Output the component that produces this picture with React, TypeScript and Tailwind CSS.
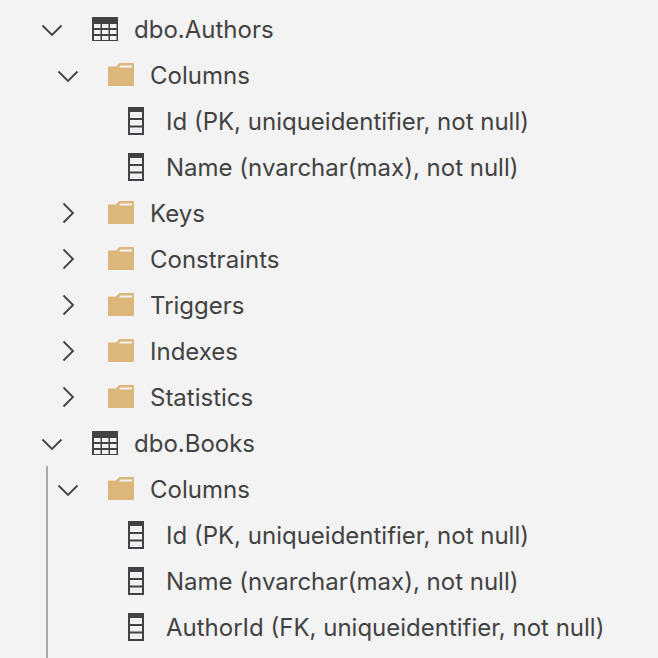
const Chevron = ({ open }: { open: boolean }) => (
  <svg width="22" height="22" viewBox="0 0 22 22" fill="none" stroke="#424242" strokeWidth="1.8" className={open ? "shrink-0" : "-mt-[2px] shrink-0"}>
    {open ? <path d="M1.5 6.5 L11 16 L20.5 6.5" /> : <path d="M6.5 1.5 L16 11 L6.5 20.5" />}
  </svg>
);

const TableIcon = () => (
  <svg width="26" height="24" viewBox="0 0 26 24" className="-mt-[2px] shrink-0">
    <rect x="0" y="0" width="26" height="24" fill="#424242" />
    <g fill="#f3f3f3">
      {[7, 13, 19].map((y) =>
        [2, 10, 18].map((x) => <rect key={`${x}-${y}`} x={x} y={y} width="6.5" height="4" />)
      )}
    </g>
  </svg>
);

const FolderIcon = () => (
  <svg width="26" height="23" viewBox="0 0 26 23" className="-mt-[4px] shrink-0">
    <path d="M1 3.5 H8 L10.5 0.8 Q11.2 0 12.2 0 H25 Q26 0 26 1 V22 Q26 23 25 23 H1 Q0 23 0 22 V4.5 Q0 3.5 1 3.5 Z" fill="#dcb67a" />
    <path d="M11 4.6 L12.6 2.4 H24 V4.6 Z" fill="#f3f3f3" />
  </svg>
);

const ColumnIcon = () => (
  <svg width="16" height="28" viewBox="0 0 16 28" className="-mt-[2px] shrink-0">
    <rect x="0" y="0" width="16" height="28" fill="#424242" />
    <g fill="#eef0f3">
      <rect x="2" y="5" width="12" height="6" />
      <rect x="2" y="13" width="12" height="5.5" />
      <rect x="2" y="20.5" width="12" height="5.5" />
    </g>
  </svg>
);

type RowProps = { indent: string; chevron?: boolean | null; icon: React.ReactNode; iconBox: string; label: string };

const Row = ({ indent, chevron = null, icon, iconBox, label }: RowProps) => (
  <div className={`flex h-[46px] items-center ${indent}`}>
    <div className="flex w-[22px] shrink-0 items-center justify-center">
      {chevron !== null && <Chevron open={chevron} />}
    </div>
    <div className={`flex shrink-0 items-center justify-start ${iconBox}`}>{icon}</div>
    <span className="whitespace-nowrap text-[24px] leading-none text-[#424242]">{label}</span>
  </div>
);

const Column = ({ label }: { label: string }) => (
  <Row indent="pl-[106px]" icon={<ColumnIcon />} iconBox="w-[38px]" label={label} />
);

const Folder = ({ label, open = false }: { label: string; open?: boolean }) => (
  <Row indent="pl-[57px]" chevron={open} icon={<FolderIcon />} iconBox="w-[71px] pl-[29px]" label={label} />
);

const Table = ({ label }: { label: string }) => (
  <Row indent="pl-[41px]" chevron={true} icon={<TableIcon />} iconBox="w-[71px] pl-[29px]" label={label} />
);

const Rest = () => (
  <>
    <Folder label="Keys" />
    <Folder label="Constraints" />
    <Folder label="Triggers" />
    <Folder label="Indexes" />
    <Folder label="Statistics" />
  </>
);

export default function App() {
  return (
    <div className="h-[658px] w-[658px] overflow-hidden bg-[#f3f3f3] pt-[7px] font-['Inter',sans-serif]">
      <Table label="dbo.Authors" />
      <Folder label="Columns" open />
      <Column label="Id (PK, uniqueidentifier, not null)" />
      <Column label="Name (nvarchar(max), not null)" />
      <Rest />
      <Table label="dbo.Books" />
      <div className="relative">
        <div className="absolute -bottom-[10px] left-[46px] -top-[1px] w-[2px] bg-[#a9a9a9]" />
        <Folder label="Columns" open />
        <Column label="Id (PK, uniqueidentifier, not null)" />
        <Column label="Name (nvarchar(max), not null)" />
        <Column label="AuthorId (FK, uniqueidentifier, not null)" />
      </div>
    </div>
  );
}
